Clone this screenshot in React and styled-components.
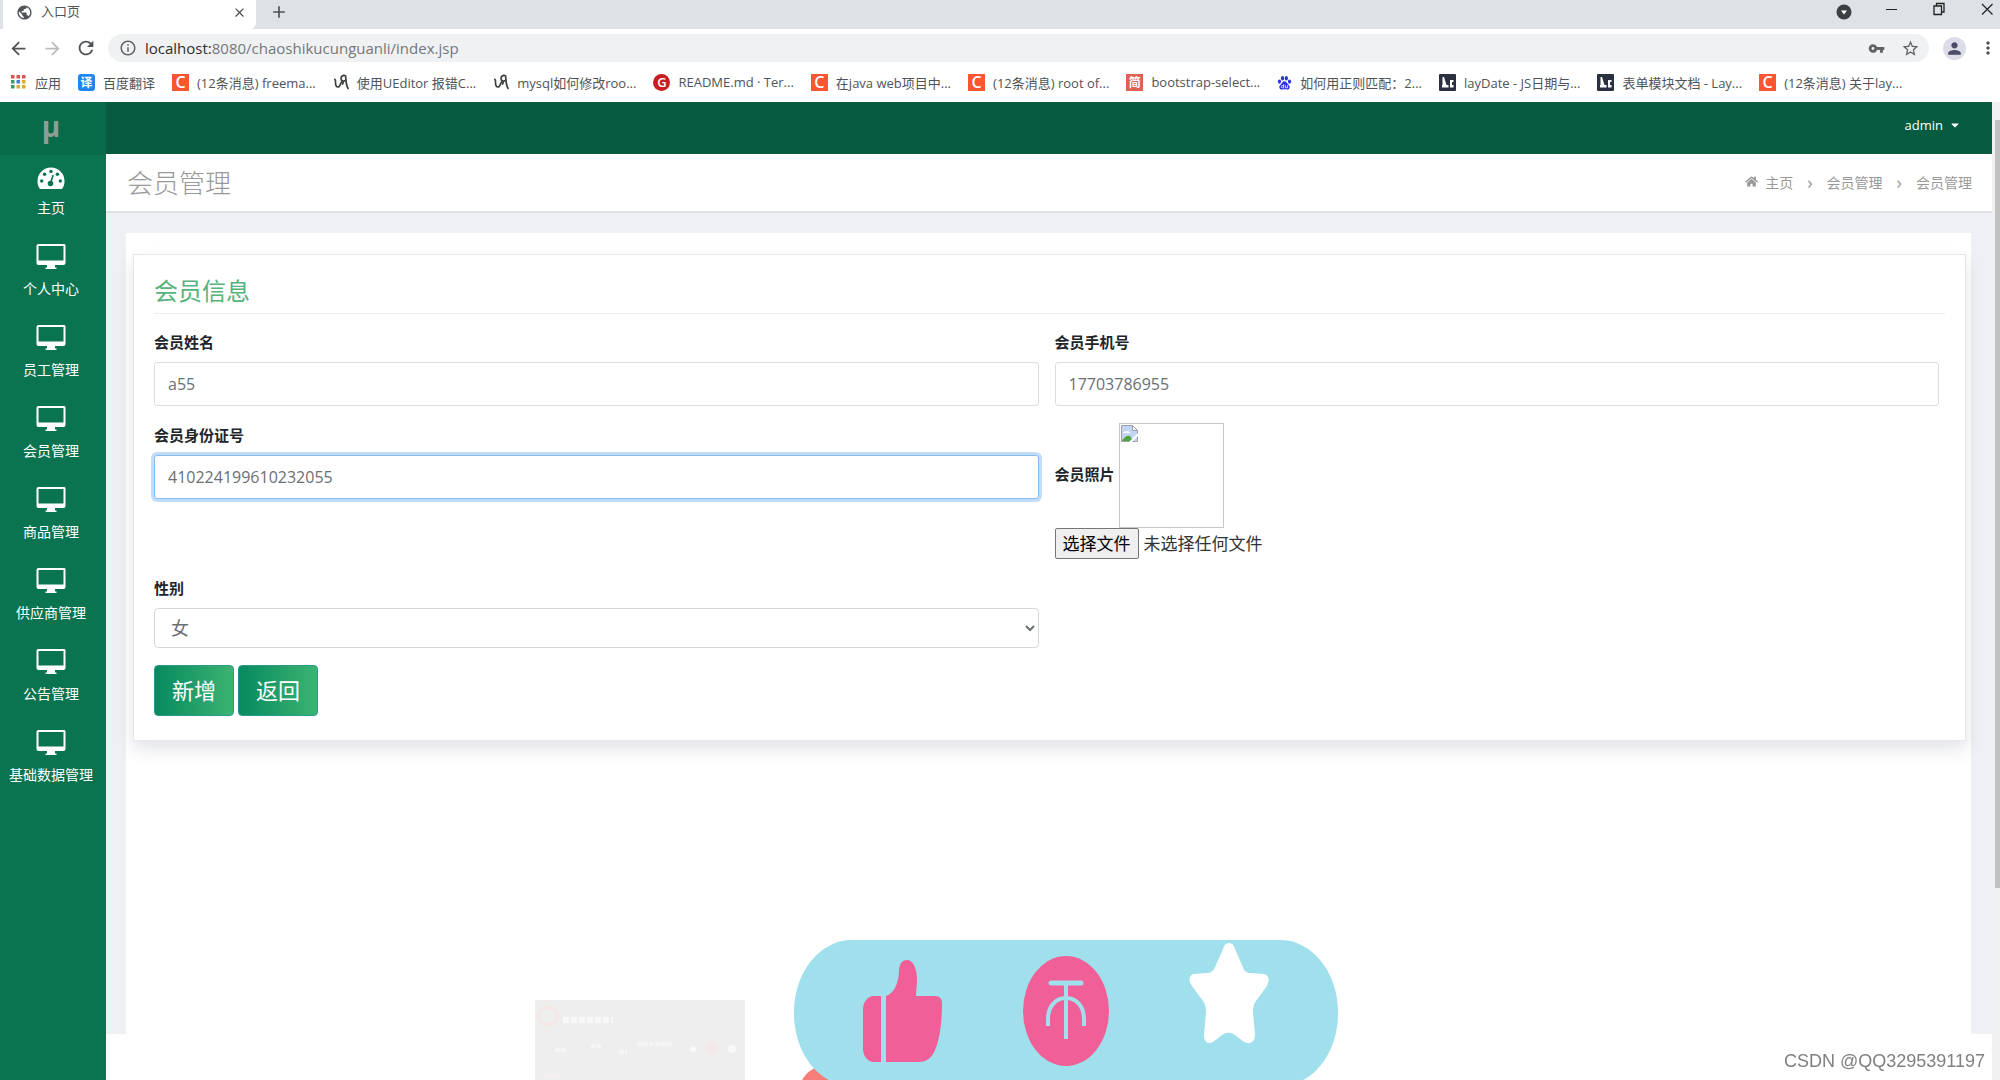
import React, { useState } from "react";
import styled, { createGlobalStyle } from "styled-components";
import {
  MdPublic,
  MdClose,
  MdAdd,
  MdArrowBack,
  MdArrowForward,
  MdRefresh,
  MdInfoOutline,
  MdVpnKey,
  MdStarBorder,
  MdPerson,
  MdMoreVert,
} from "react-icons/md";
import { FaHome, FaCaretDown } from "react-icons/fa";

const bookmarks = [
  { icon: "csdn", text: "(12条消息) freema..." },
  { icon: "ue", text: "使用UEditor 报错C..." },
  { icon: "ue", text: "mysql如何修改roo..." },
  { icon: "gitee", text: "README.md · Ter..." },
  { icon: "csdn", text: "在java web项目中..." },
  { icon: "csdn", text: "(12条消息) root of..." },
  { icon: "jian", text: "bootstrap-select..." },
  { icon: "baidu", text: "如何用正则匹配：2..." },
  { icon: "layui", text: "layDate - JS日期与..." },
  { icon: "layui", text: "表单模块文档 - Lay..." },
  { icon: "csdn", text: "(12条消息) 关于lay..." },
];

const menuItems = [
  "个人中心",
  "员工管理",
  "会员管理",
  "商品管理",
  "供应商管理",
  "公告管理",
  "基础数据管理",
];

const appColors = ["#d9534f", "#d9534f", "#d9534f", "#3f9a5f", "#3b82d8", "#e0a82e", "#3f9a5f", "#e0a82e", "#e0a82e"];

const AppsIcon = () => (
  <svg width="17" height="16" viewBox="0 0 17 16">
    {appColors.map((color, i) => (
      <rect key={i} x={1 + (i % 3) * 5.5} y={1 + Math.floor(i / 3) * 5} width="3.500" height="3.500" fill={color} />
    ))}
  </svg>
);

const BookmarkIcon = ({ name }) => {
  if (name === "csdn") return <Favicon $bg="#fc5531" $size={16}>C</Favicon>;
  if (name === "gitee") return <Favicon $bg="#c71d23" $size={13} $round>G</Favicon>;
  if (name === "jian") return <Favicon $bg="#e2604f" $size={12}>简</Favicon>;
  if (name === "layui") {
    return (
      <svg width="17" height="17" viewBox="0 0 17 17">
        <rect width="17" height="17" rx="1" fill="#2b3040" />
        <path d="M3 13.500h6.500V11H7.500L5 3H3.500v8H3zM11 6h3.500v2H13v3h1.500v2.500H11z" fill="#fff" />
      </svg>
    );
  }
  if (name === "baidu") {
    return (
      <svg width="15" height="17" viewBox="0 0 17 17" fill="#2932e1">
        <ellipse cx="2.800" cy="7.500" rx="1.800" ry="2.400" />
        <ellipse cx="6.300" cy="3.600" rx="1.800" ry="2.500" />
        <ellipse cx="10.600" cy="3.600" rx="1.800" ry="2.500" />
        <ellipse cx="14.200" cy="7.500" rx="1.800" ry="2.400" />
        <path d="M8.500 7c-2 0-2.500 2-4 3.500-1.600 1.500-2.200 2.500-1.700 4.200.5 1.800 2.400 1.800 5.700 1.500 3.300.3 5.200.3 5.700-1.500.5-1.700-.1-2.700-1.700-4.200C11 9 10.500 7 8.500 7z" />
        <path d="M7.500 10.500v4H6a1.200 1.200 0 0 1 0-2.500h1.500M9.500 11.500v3H12v-3" fill="none" stroke="#fff" strokeWidth="0.900" />
      </svg>
    );
  }
  return (
    <svg width="16" height="17" viewBox="0 0 16 17" fill="none" stroke="#3d4043" strokeWidth="1.700">
      <path d="M1 5.500c1.500-.5 1.500 1 1.500 3 0 3 1 4.500 2.500 4.500 2.500 0 2.500-5 4.500-6" />
      <path d="M13 2.500c-2-2-5-1-5 2 0 2.500 3 3.500 5 1.500M12.500 2c.8 4 0 9 3 13M9.500 7.500c1 1 1 2-.5 3" />
    </svg>
  );
};

const DashboardIcon = () => (
  <svg width="28" height="22" viewBox="0 0 28 22">
    <path d="M3 22C1.200 19.800.5 17 .5 14a13.500 13.500 0 0 1 27 0c0 3-.7 5.800-2.500 8z" fill="#fff" />
    <g fill="#0a7450">
      <circle cx="4.700" cy="14" r="1.700" />
      <circle cx="7.600" cy="7.300" r="1.700" />
      <circle cx="14" cy="4.400" r="1.700" />
      <circle cx="20.400" cy="7.300" r="1.700" />
      <circle cx="23.300" cy="14" r="1.700" />
      <circle cx="13.500" cy="16.500" r="2.800" />
    </g>
    <path d="M13.600 16l2.600-8" stroke="#0a7450" strokeWidth="1.600" />
  </svg>
);

const MonitorIcon = () => (
  <svg width="30" height="26" viewBox="0 0 30 26" fill="#fff">
    <path
      fillRule="evenodd"
      d="M2.500 0h25A1.800 1.800 0 0 1 29.500 2v17a2 2 0 0 1-2 2H19v2.500h1.500V25h-11v-1.500H11V21H2.500a2 2 0 0 1-2-2V2a2 2 0 0 1 2-2zM2.500 2v14.500h25V2z"
    />
  </svg>
);

const BrokenImageIcon = () => (
  <svg width="17" height="17" viewBox="0 0 17 17">
    <path d="M.5.500h11l5 5v11H.5z" fill="#c3d5f2" stroke="#9aa0a6" />
    <path d="M11.500.500v5h5z" fill="#fff" stroke="#9aa0a6" />
    <path d="M2 8a2 2 0 0 1 3-1.500A2.500 2.500 0 0 1 9 8z" fill="#fff" />
    <path d="M1 16c2-4 5-6 8-5l3 5z" fill="#52a344" />
    <path d="M8 17L17 8v3l-6 6z" fill="#fff" />
  </svg>
);

// Like / coin / favourite strip
const ReactionArt = () => (
  <svg width="544" height="140" viewBox="0 0 544 140">
    <ellipse cx="36" cy="146" rx="29" ry="21" fill="#f77e78" />
    <rect x="0" y="0" width="544" height="146" rx="58" ry="72" fill="#a0dfec" />
    <g fill="#f15f98">
      <path d="M87 56v66H80c-6 0-11-6-11-13V69c0-7 5-13 11-13z" />
      <path d="M92 122V56c8-3 12-11 13-24 0-8 3-12 8-12 6 0 10 8 10 20 0 6-1 11-1 16h19c5 0 7 3 7 7 0 22-3 41-9 51-3 5-8 8-14 8z" />
      <ellipse cx="272" cy="71" rx="43" ry="55" />
    </g>
    <g fill="none" stroke="#a0dfec" strokeWidth="4">
      <path d="M257 43h30" strokeWidth="5" strokeLinecap="round" />
      <path d="M272 45v54" />
      <path d="M254 86V79c0-13 8-21 18-21s18 8 18 21v7" />
    </g>
    <path
      d="M435 3c3 0 5 2 6 6l7 16c2 6 4 8 8 8l14 1c5 1 6 6 3 12l-8 11c-5 6-6 9-6 15l2 23c0 7-5 10-11 7l-9-7c-5-3-8-3-13 0l-9 7c-6 3-9-1-9-7l2-23c0-6-1-9-6-15l-8-11c-4-6-3-11 2-12l13-1c5 0 7-3 9-8l7-16c1-4 3-6 6-6z"
      fill="#fff"
    />
  </svg>
);

const App = () => {
  const [form, setForm] = useState({
    name: "a55",
    phone: "17703786955",
    idNumber: "410224199610232055",
    sex: "女",
  });

  const handleChange = (e) => setForm({ ...form, [e.target.name]: e.target.value });

  return (
    <Page>
      <GlobalStyle />

      {/* Browser window */}
      <TabStrip>
        <Tab>
          <MdPublic size={17} />
          <span>入口页</span>
          <IconButton type="button" aria-label="关闭标签页">
            <MdClose size={15} />
          </IconButton>
        </Tab>
        <IconButton type="button" aria-label="新标签页">
          <MdAdd size={20} />
        </IconButton>
        <WindowControls>
          <IconButton type="button" aria-label="搜索标签页">
            <svg width="16" height="16" viewBox="0 0 16 16">
              <circle cx="8" cy="8" r="7.500" fill="#3c4043" />
              <path d="M5 6.500h6L8 10.500z" fill="#fff" />
            </svg>
          </IconButton>
          <WindowButton type="button" aria-label="最小化">
            <svg width="14" height="14" viewBox="0 0 14 14" stroke="#222" fill="none">
              <path d="M2 7.500h11" />
            </svg>
          </WindowButton>
          <WindowButton type="button" aria-label="还原">
            <svg width="14" height="14" viewBox="0 0 14 14" stroke="#222" fill="none" strokeWidth="1.300">
              <path d="M2 4h7.500v8.500H2zM4.500 4V1.500H12V10H9.500" />
            </svg>
          </WindowButton>
          <WindowButton type="button" aria-label="关闭">
            <svg width="14" height="14" viewBox="0 0 14 14" stroke="#222" fill="none" strokeWidth="1.200">
              <path d="M2 2l10.500 10.500M12.500 2L2 12.500" />
            </svg>
          </WindowButton>
        </WindowControls>
      </TabStrip>

      <Toolbar>
        <IconButton type="button" aria-label="后退">
          <MdArrowBack size={21} />
        </IconButton>
        <IconButton type="button" aria-label="前进" $muted>
          <MdArrowForward size={21} />
        </IconButton>
        <IconButton type="button" aria-label="刷新">
          <MdRefresh size={22} />
        </IconButton>
        <AddressBar>
          <MdInfoOutline size={18} />
          <Address>
            <b>localhost:</b>8080/chaoshikucunguanli/index.jsp
          </Address>
          <MdVpnKey size={17} />
          <MdStarBorder size={19} />
        </AddressBar>
        <Avatar type="button" aria-label="用户">
          <MdPerson size={19} />
        </Avatar>
        <IconButton type="button" aria-label="菜单">
          <MdMoreVert size={20} />
        </IconButton>
      </Toolbar>

      <BookmarkBar>
        <Bookmark href="#apps">
          <AppsIcon />
          <span>应用</span>
        </Bookmark>
        <Bookmark href="#fanyi">
          <Favicon $bg="#1f86f0" $size={12} $rounded>译</Favicon>
          <span>百度翻译</span>
        </Bookmark>
        {bookmarks.map((item) => (
          <Bookmark key={item.text} href="#bookmark">
            <BookmarkIcon name={item.icon} />
            <span>{item.text}</span>
          </Bookmark>
        ))}
      </BookmarkBar>

      <Viewport>
        <Sidebar>
          <Brand href="#home">µ</Brand>
          <MenuLink href="#home">
            <DashboardIcon />
            <span>主页</span>
          </MenuLink>
          {menuItems.map((label) => (
            <MenuLink key={label} href="#menu">
              <MonitorIcon />
              <span>{label}</span>
            </MenuLink>
          ))}
        </Sidebar>

        <Main>
          <Navbar>
            <UserButton type="button">
              admin <FaCaretDown size={12} />
            </UserButton>
          </Navbar>

          <TitleBar>
            <h1>会员管理</h1>
            <Breadcrumb>
              <a href="#home">
                <FaHome size={13} />
                主页
              </a>
              <i>›</i>
              <a href="#member">会员管理</a>
              <i>›</i>
              <span>会员管理</span>
            </Breadcrumb>
          </TitleBar>

          <Content>
            <Panel>
              <Card>
                <h2>会员信息</h2>
                <Form onSubmit={(e) => e.preventDefault()}>
                  <Field>
                    <label htmlFor="name">会员姓名</label>
                    <TextInput id="name" name="name" value={form.name} onChange={handleChange} />
                  </Field>
                  <Field>
                    <label htmlFor="phone">会员手机号</label>
                    <TextInput id="phone" name="phone" value={form.phone} onChange={handleChange} />
                  </Field>
                  <Field>
                    <label htmlFor="idNumber">会员身份证号</label>
                    <TextInput
                      id="idNumber"
                      name="idNumber"
                      value={form.idNumber}
                      onChange={handleChange}
                      $active
                    />
                  </Field>
                  <div>
                    <PhotoRow>
                      <label htmlFor="photo">会员照片</label>
                      <PhotoFrame>
                        <BrokenImageIcon />
                      </PhotoFrame>
                    </PhotoRow>
                    <FilePicker htmlFor="photo">
                      <input id="photo" type="file" />
                      <span>选择文件</span>
                      未选择任何文件
                    </FilePicker>
                  </div>
                  <Field>
                    <label htmlFor="sex">性别</label>
                    <SelectInput id="sex" name="sex" value={form.sex} onChange={handleChange}>
                      <option>女</option>
                      <option>男</option>
                    </SelectInput>
                  </Field>
                  <Actions>
                    <SubmitButton type="submit">新增</SubmitButton>
                    <SubmitButton type="button">返回</SubmitButton>
                  </Actions>
                </Form>
              </Card>
            </Panel>
          </Content>
          <Footer />
        </Main>

        <ScrollTrack>
          <ScrollThumb />
        </ScrollTrack>
      </Viewport>

      {/* Floating layer over the page */}
      <Reactions>
        <Thumbnail>
          <svg width="210" height="80" viewBox="0 0 210 80" fill="none">
            <circle cx="13" cy="16" r="9" stroke="#f3e8e8" strokeWidth="4" />
            <g stroke="#f8f8f8">
              <path d="M28 20h50" strokeWidth="6" strokeDasharray="6 2" />
              <path d="M20 50h12M56 46h10M84 52h8M102 44h36" strokeWidth="4" strokeDasharray="5 1" opacity="0.700" />
            </g>
            <circle cx="158" cy="49" r="3" fill="#f8f8f8" />
            <circle cx="177" cy="48" r="6" fill="#f3e9e9" />
            <circle cx="197" cy="49" r="4" fill="#f8f8f8" />
            <path d="M8 76h20" stroke="#f4efef" strokeWidth="4" />
          </svg>
        </Thumbnail>
        <ReactionArt />
      </Reactions>
      <Watermark>CSDN @QQ3295391197</Watermark>
    </Page>
  );
};

const GlobalStyle = createGlobalStyle`
  * {
    box-sizing: border-box;
  }

  body {
    margin: 0;
    overflow: hidden;
    color: #212529;
    background: #fff;
    font-family: "Open Sans", "Noto Sans CJK SC", sans-serif;
    font-size: 14px;
  }

  a {
    color: inherit;
    text-decoration: none;
  }

  button,
  input,
  select {
    font-family: inherit;
  }

  svg {
    display: block;
    flex-shrink: 0;
  }
`;

const Page = styled.div`
  display: flex;
  flex-direction: column;
  height: 100vh;
`;

/* Browser window */
const IconButton = styled.button`
  display: flex;
  align-items: center;
  justify-content: center;
  width: 24px;
  height: 24px;
  padding: 0;
  border: none;
  background: none;
  color: ${({ $muted }) => ($muted ? "#b9bbbe" : "#505357")};
`;

const TabStrip = styled.div`
  display: flex;
  align-items: flex-start;
  gap: 11px;
  height: 29px;
  padding-left: 3px;
  background: #dee1e6;
`;

const Tab = styled.div`
  display: flex;
  align-items: center;
  gap: 8px;
  width: 253px;
  height: 29px;
  padding: 0 5px 5px 13px;
  background: #fff;
  border-radius: 0 0 6px 0;
  color: #505357;
  font-size: 13px;
  line-height: 16px;

  span {
    flex: 1;
    padding-bottom: 2px;
  }
`;

const WindowControls = styled.div`
  display: flex;
  align-items: center;
  gap: 22px;
  margin-left: auto;
`;

const WindowButton = styled(IconButton)`
  width: 26px;
  padding-bottom: 6px;
`;

const Toolbar = styled.div`
  display: flex;
  align-items: center;
  gap: 10px;
  height: 38px;
  padding: 0 0 0 6px;
`;

const AddressBar = styled.div`
  flex: 1;
  display: flex;
  align-items: center;
  gap: 16px;
  height: 28px;
  padding: 0 9px 0 11px;
  border-radius: 14px;
  background: #f0f1f3;
  color: #5f6368;
`;

const Address = styled.span`
  flex: 1;
  margin-left: -8px;
  font-size: 15px;
  color: #74777b;

  b {
    font-weight: 400;
    color: #2b2e31;
  }
`;

const Avatar = styled.button`
  display: flex;
  align-items: center;
  justify-content: center;
  width: 23px;
  height: 23px;
  margin-left: 4px;
  padding: 0;
  border: none;
  border-radius: 50%;
  background: #dcdde8;
  color: #4b4d68;
`;

const BookmarkBar = styled.nav`
  display: flex;
  align-items: center;
  gap: 17px;
  height: 35px;
  padding: 0 10px 5px;
`;

const Bookmark = styled.a`
  display: flex;
  align-items: center;
  gap: 8px;
  color: #505357;
  font-size: 13px;
  white-space: nowrap;
`;

const Favicon = styled.b`
  display: flex;
  align-items: center;
  justify-content: center;
  width: 17px;
  height: 17px;
  border-radius: ${({ $round, $rounded }) => ($round ? "50%" : $rounded ? "3px" : "0")};
  background: ${({ $bg }) => $bg};
  color: #fff;
  font-size: ${({ $size }) => $size}px;
  font-weight: 600;
`;

/* Site layout */
const Viewport = styled.div`
  flex: 1;
  display: flex;
  min-height: 0;
`;

const Sidebar = styled.nav`
  width: 106px;
  background: #0a7450;
  color: #fff;
`;

const Brand = styled.a`
  display: flex;
  align-items: center;
  justify-content: center;
  height: 53px;
  padding: 0 4px 6px 0;
  background: #086b49;
  color: #8f9f96;
  font-size: 28px;
  font-weight: 700;
`;

const MenuLink = styled.a`
  display: flex;
  flex-direction: column;
  align-items: center;
  justify-content: flex-end;
  gap: 9px;
  height: 81px;
  padding: 0 4px 17px 0;
  line-height: 20px;

  &:nth-child(2) {
    height: 64px;
    padding-bottom: 1px;
    margin-bottom: 16px;
  }
`;

const Main = styled.main`
  flex: 1;
  display: flex;
  flex-direction: column;
  min-width: 0;
`;

const Navbar = styled.header`
  display: flex;
  align-items: center;
  justify-content: flex-end;
  height: 52px;
  padding: 0 31px 6px 0;
  background: #065b40;
`;

const UserButton = styled.button`
  display: flex;
  align-items: center;
  gap: 6px;
  padding: 0;
  border: none;
  background: none;
  color: #fff;
  font-size: 13px;
`;

const TitleBar = styled.div`
  display: flex;
  align-items: center;
  justify-content: space-between;
  height: 59px;
  padding: 0 20px 2px 21px;
  border-bottom: 2px solid #dfe1e4;
  color: #999;

  h1 {
    margin: 0;
    font-size: 26px;
    font-weight: 300;
  }
`;

const Breadcrumb = styled.nav`
  display: flex;
  align-items: center;
  gap: 14px;

  a {
    display: flex;
    align-items: center;
    gap: 7px;
  }

  i {
    font-size: 18px;
    font-style: normal;
    line-height: 16px;
  }
`;

const Content = styled.div`
  flex: 1;
  padding: 20px 21px 0 20px;
  background: #eff0f3;
`;

const Panel = styled.section`
  height: 100%;
  padding: 21px 5px 0 7px;
  background: #fff;
`;

const Card = styled.div`
  padding: 22px 20px 24px;
  border: 1px solid #e6e7e9;
  background: #fff;
  box-shadow: 0 8px 16px rgba(50, 60, 100, 0.14);

  h2 {
    margin: 0 0 16px;
    padding-bottom: 8px;
    border-bottom: 1px solid #ececec;
    color: #55b37c;
    font-size: 24px;
    font-weight: 400;
    line-height: 28px;
  }
`;

const Form = styled.form`
  display: grid;
  grid-template-columns: 1fr 1fr;
  gap: 17px 16px;
  padding-right: 6px;

  label {
    font-size: 15px;
    font-weight: 700;
    line-height: 24px;
  }
`;

const Field = styled.div`
  display: flex;
  flex-direction: column;
  gap: 8px;
`;

const TextInput = styled.input`
  width: 100%;
  height: 44px;
  padding: 0 13px;
  border: 1px solid ${({ $active }) => ($active ? "#86bdf3" : "#dcdee0")};
  border-radius: 3px;
  outline: none;
  background: #fff;
  box-shadow: ${({ $active }) => ($active ? "0 0 0 3px #c3ddf8" : "none")};
  color: #6a6f74;
  font-size: 16px;
`;

const SelectInput = styled.select`
  width: 100%;
  height: 40px;
  padding: 0 12px;
  border: 1px solid #d5d7d9;
  border-radius: 4px;
  background: #fff;
  color: #6a6f74;
  font-size: 18px;
`;

const PhotoRow = styled.div`
  display: flex;
  align-items: center;
  gap: 4px;

  label {
    padding-bottom: 4px;
  }
`;

const PhotoFrame = styled.div`
  width: 105px;
  height: 105px;
  padding: 1px;
  border: 1px solid #c8c8c8;
`;

const FilePicker = styled.label`
  && {
    display: flex;
    align-items: center;
    gap: 5px;
    color: #333;
    font-size: 17px;
    font-weight: 400;
  }

  input {
    position: absolute;
    width: 1px;
    height: 1px;
    opacity: 0;
  }

  span {
    padding: 3px 7px 2px;
    border: 1px solid #767676;
    border-radius: 2px;
    background: #efefef;
    color: #000;
  }
`;

const Actions = styled.div`
  grid-column: 1 / -1;
  display: flex;
  gap: 4px;
`;

const SubmitButton = styled.button`
  height: 51px;
  padding: 0 17px 3px;
  border: 1px solid #2a9a90;
  border-radius: 4px;
  background: linear-gradient(to right, #078a60, #3cb371);
  color: #fff;
  font-size: 22px;
`;

const Footer = styled.footer`
  height: 46px;
  background: #fff;
`;

const ScrollTrack = styled.div`
  width: 8px;
  padding: 18px 0 0 3px;
  background: #f1f1f2;
`;

const ScrollThumb = styled.div`
  height: 80%;
  background: #c1c1c1;
`;

/* Floating layer */
const Reactions = styled.div`
  position: fixed;
  bottom: 0;
  left: 535px;
  display: flex;
  align-items: flex-end;
  gap: 49px;
`;

const Thumbnail = styled.div`
  background: #eee;
`;

const Watermark = styled.div`
  position: fixed;
  right: 15px;
  bottom: 8px;
  color: #808080;
  font-family: "Liberation Sans", sans-serif;
  font-size: 18px;
`;

export default App;
